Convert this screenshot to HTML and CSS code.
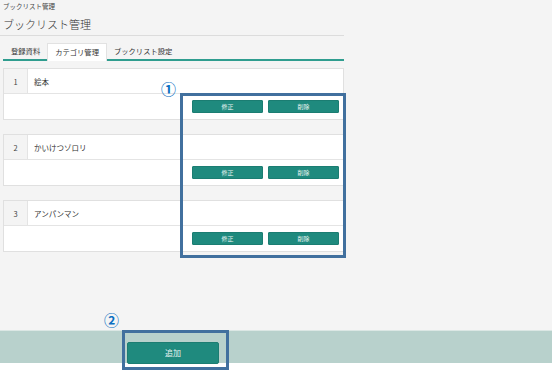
FILE: index.html
```html
<!DOCTYPE html>
<html lang="ja">
<head>
<meta charset="utf-8">
<link rel="stylesheet" href="styles.css">
</head>
<body>
<div class="page">
  <main class="main">
    <div class="crumb">ブックリスト管理</div>
    <h1 class="title">ブックリスト管理</h1>
    <nav class="tabs">
      <span class="tab">登録資料</span>
      <span class="tab active">カテゴリ管理</span>
      <span class="tab">ブックリスト設定</span>
    </nav>
    <div class="cards">
      <div class="card">
        <div class="card-head"><span class="num">1</span><span class="name">絵本</span></div>
        <div class="card-body"><button class="btn">修正</button><button class="btn">削除</button></div>
      </div>
      <div class="card">
        <div class="card-head"><span class="num">2</span><span class="name">かいけつゾロリ</span></div>
        <div class="card-body"><button class="btn">修正</button><button class="btn">削除</button></div>
      </div>
      <div class="card">
        <div class="card-head"><span class="num">3</span><span class="name">アンパンマン</span></div>
        <div class="card-body"><button class="btn">修正</button><button class="btn">削除</button></div>
      </div>
    </div>
  </main>
  <footer class="footer">
    <button class="btn add">追加</button>
  </footer>
</div>
<div class="mark mark-box1"></div>
<div class="mark mark-box2"></div>
<span class="circ circ1">①</span>
<span class="circ circ2">②</span>
</body>
</html>
```

FILE: styles.css
```css
* { box-sizing: border-box; }
html, body { margin: 0; padding: 0; }
body {
  width: 552px;
  height: 371px;
  background: #ffffff;
  font-family: "Noto Sans CJK JP", "Noto Sans", sans-serif;
  color: #333;
  position: relative;
  overflow: hidden;
}
.page {
  height: 363px;
  background: #f4f4f4;
  display: flex;
  flex-direction: column;
}
.main {
  flex: 1;
  width: 344px;
  padding-left: 3px;
}
.crumb {
  font-size: 6.5px;
  line-height: 8px;
  padding-top: 2px;
  color: #444;
}
.title {
  margin: 0 0 0 -3px;
  padding: 7px 0 4px 3px;
  font-size: 11px;
  line-height: 14px;
  font-weight: 300;
  color: #333;
  border-bottom: 1px solid #dcdcdc;
}
.tabs {
  display: flex;
  align-items: flex-end;
  margin-top: 7px;
  height: 18px;
  border-bottom: 2px solid #2f9d8f;
}
.tab {
  font-size: 7.3px;
  line-height: 16px;
  padding: 0 7px;
  color: #333;
  height: 16px;
}
.tab.active {
  background: #fff;
  border: 1px solid #e2e2e2;
  border-bottom: none;
  height: 18px;
  margin-bottom: -2px;
  line-height: 17px;
}
.tab:first-child { padding-left: 8px; }
.cards {
  margin-top: 7px;
  display: flex;
  flex-direction: column;
  gap: 14px;
}
.card {
  background: #fff;
  border: 1px solid #e0e0e0;
  height: 52px;
  display: flex;
  flex-direction: column;
}
.card-head {
  display: flex;
  height: 25px;
  border-bottom: 1px solid #e4e4e4;
  font-size: 7.5px;
}
.num {
  width: 24px;
  background: #f4f4f4;
  border-right: 1px solid #e4e4e4;
  display: flex;
  align-items: center;
  justify-content: center;
  color: #444;
}
.name {
  display: flex;
  align-items: center;
  padding-left: 6px;
}
.card-body {
  flex: 1;
  display: flex;
  justify-content: flex-end;
  align-items: flex-start;
  gap: 5px;
  padding: 6px 4px 0 0;
}
.btn {
  width: 71px;
  height: 13px;
  border: 1px solid #1b7d72;
  border-radius: 1px;
  background: #1f8a7e;
  color: #e8f4f2;
  font-family: "Noto Sans CJK JP", sans-serif;
  font-size: 6px;
  padding: 0;
  line-height: 11px;
}
.footer {
  height: 33px;
  background: #b8d1cc;
  border-top: 1px solid #dbe7e4;
  padding: 6px 0 0 127px;
}
.btn.add {
  width: 92px;
  height: 22px;
  font-size: 8px;
  line-height: 20px;
  border-radius: 2px;
}
.mark {
  position: absolute;
  border: 3px solid #41709e;
}
.mark-box1 { left: 180px; top: 93px; width: 166px; height: 165px; }
.mark-box2 { left: 122px; top: 330px; width: 107px; height: 40px; }
.circ {
  position: absolute;
  color: #0a6fc2;
  font-size: 15px;
  line-height: 15px;
  font-family: "Noto Sans CJK JP", sans-serif;
  font-weight: bold;
}
.circ1 { left: 161px; top: 81px; }
.circ2 { left: 104px; top: 312px; }
```
